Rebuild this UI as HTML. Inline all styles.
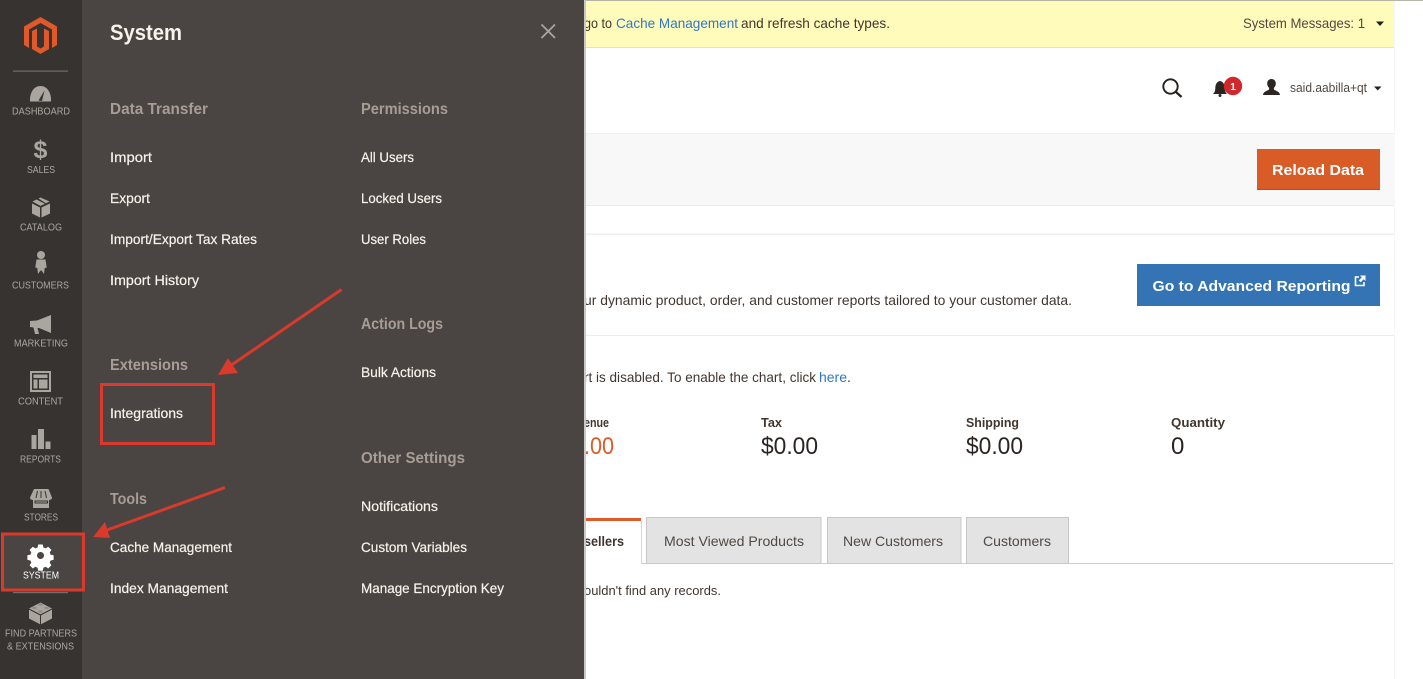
<!DOCTYPE html>
<html lang="en">
<head>
<meta charset="utf-8">
<title>System</title>
<style>
html,body{margin:0;padding:0;background:#fff;width:1423px;height:679px;overflow:hidden}
svg{display:block;position:absolute;left:0;top:0}
text{font-family:"Liberation Sans",sans-serif}
.l{font-size:14px;fill:#f7f3eb;stroke:#f7f3eb;stroke-width:.2px}
.h{font-size:16px;font-weight:bold;fill:#a79d95}
.s{font-size:10px;fill:#aaa69f;text-anchor:start}
.b{font-size:14px;fill:#41362f}
.t{font-size:14px;fill:#514943}
.i{fill:#aaa69f}
</style>
</head>
<body>
<svg width="1423" height="679" viewBox="0 0 1423 679" xmlns="http://www.w3.org/2000/svg">
<rect width="1423" height="679" fill="#fff"/>
<rect x="1394" y="0" width="1" height="679" fill="#f6f6f6"/>

<!-- banner -->
<rect x="584" y="0" width="810" height="48" fill="#fffbbb"/>
<rect x="584" y="0" width="839" height="1" fill="#b5b5a5"/>
<rect x="584" y="47" width="810" height="1" fill="#e6e3b8"/>
<text class="b" x="584" y="28" textLength="28" lengthAdjust="spacingAndGlyphs">go to</text>
<text x="616" y="28" font-size="14" fill="#2f78c5" textLength="122" lengthAdjust="spacingAndGlyphs">Cache Management</text>
<text class="b" x="741" y="28" textLength="149" lengthAdjust="spacingAndGlyphs">and refresh cache types.</text>
<text x="1243" y="28" font-size="14" fill="#514943" textLength="122" lengthAdjust="spacingAndGlyphs">System Messages: 1</text>
<path d="M1376 21.500h8l-4 4.500z" fill="#222"/>

<!-- top actions -->
<circle cx="1170.500" cy="86.500" r="7.200" fill="none" stroke="#24211f" stroke-width="1.900"/>
<path d="M1175.800 91.800l5.700 5.200" stroke="#24211f" stroke-width="2.300" fill="none"/>
<path d="M1213 94c2.200-2 2.200-4 2.400-7 .3-3.500 2-5.500 4.600-6 2.600.5 4.400 2.500 4.700 6 .2 3 .2 5 2.300 7z" fill="#2b2623"/>
<circle cx="1220" cy="95.500" r="1.500" fill="#2b2623"/>
<circle cx="1233" cy="86" r="9.200" fill="#d1282b"/>
<text x="1233" y="90" font-size="10.500" font-weight="bold" fill="#fff" text-anchor="middle">1</text>
<path d="M1263 95c.4-3.500 3.600-4 5.800-5.300.5-.8.400-1.500 0-2.200-1.300-1.500-1.800-3-1.500-5 .3-2 2-3.500 4.200-3.500 2.200 0 3.900 1.500 4.200 3.500.3 2-.2 3.500-1.500 5-.4.700-.5 1.400 0 2.200 2.200 1.300 5.400 1.800 5.800 5.300z" fill="#2b2623"/>
<text x="1290" y="92" font-size="12.500" fill="#514943" textLength="77" lengthAdjust="spacingAndGlyphs">said.aabilla+qt</text>
<path d="M1374 86.500h7.500l-3.750 4z" fill="#222"/>

<!-- reload bar -->
<rect x="584" y="134" width="810" height="71" fill="#f8f8f8"/>
<rect x="584" y="133" width="810" height="1" fill="#f0f0f0"/>
<rect x="584" y="205" width="810" height="1" fill="#ececec"/>
<rect x="1257" y="149" width="123" height="41" fill="#d95b25"/>
<rect x="1257" y="189" width="123" height="1" fill="#bd4c1c"/>
<text x="1272" y="175" font-size="15" font-weight="bold" fill="#fff" textLength="92" lengthAdjust="spacingAndGlyphs">Reload Data</text>

<rect x="584" y="233.500" width="810" height="1.500" fill="#efefef"/>
<rect x="584" y="335" width="810" height="1" fill="#ececec"/>

<!-- advanced reporting -->
<rect x="1137" y="264" width="243" height="42" fill="#3474b5"/>
<text x="1152.500" y="291" font-size="15" font-weight="bold" fill="#fff" textLength="198" lengthAdjust="spacingAndGlyphs">Go to Advanced Reporting</text>
<path d="M1359 277h-3.500v8.500h8.500v-3.500" fill="none" stroke="#fff" stroke-width="1.600"/>
<path d="M1360 275.500h5.500v5.500l-1.800-1.700-3 3-1.900-1.900 3-3z" fill="#fff"/>
<text class="b" x="584" y="305" textLength="488" lengthAdjust="spacingAndGlyphs">ur dynamic product, order, and customer reports tailored to your customer data.</text>

<!-- chart text -->
<text class="b" x="584" y="382" textLength="232" lengthAdjust="spacingAndGlyphs">rt is disabled. To enable the chart, click</text>
<text x="819" y="382" font-size="14" fill="#2f78c5" textLength="28" lengthAdjust="spacingAndGlyphs">here</text>
<text class="b" x="847" y="382">.</text>

<!-- totals -->
<g font-size="13" font-weight="bold" fill="#41362f">
<text x="584" y="427" textLength="25" lengthAdjust="spacingAndGlyphs">enue</text>
<text x="761" y="427" textLength="21" lengthAdjust="spacingAndGlyphs">Tax</text>
<text x="966" y="427" textLength="53" lengthAdjust="spacingAndGlyphs">Shipping</text>
<text x="1171" y="427" textLength="54" lengthAdjust="spacingAndGlyphs">Quantity</text>
</g>
<text x="584" y="454" font-size="24" fill="#e0592a" textLength="30" lengthAdjust="spacingAndGlyphs">.00</text>
<g font-size="24" fill="#2a2522">
<text x="761" y="454" textLength="57" lengthAdjust="spacingAndGlyphs">$0.00</text>
<text x="966" y="454" textLength="57" lengthAdjust="spacingAndGlyphs">$0.00</text>
<text x="1171" y="454">0</text>
</g>

<!-- tabs -->
<rect x="584" y="563" width="809" height="1" fill="#cfcfcf"/>
<rect x="584" y="518" width="57" height="46" fill="#fff"/>
<rect x="584" y="518" width="57" height="3" fill="#e0592a"/>
<rect x="641" y="521" width="1" height="42" fill="#d6d6d6"/>
<rect x="646.500" y="517.500" width="174.500" height="46" fill="#e3e3e3" stroke="#c8c8c8"/>
<rect x="827.500" y="517.500" width="133.500" height="46" fill="#e3e3e3" stroke="#c8c8c8"/>
<rect x="966.500" y="517.500" width="102" height="46" fill="#e3e3e3" stroke="#c8c8c8"/>
<text x="584" y="546" font-size="14" font-weight="bold" fill="#41362f" textLength="40" lengthAdjust="spacingAndGlyphs">sellers</text>
<text class="t" x="664" y="546" textLength="140" lengthAdjust="spacingAndGlyphs">Most Viewed Products</text>
<text class="t" x="843" y="546" textLength="100" lengthAdjust="spacingAndGlyphs">New Customers</text>
<text class="t" x="983" y="546" textLength="68" lengthAdjust="spacingAndGlyphs">Customers</text>
<text x="584" y="595" font-size="12.500" fill="#41362f" textLength="137" lengthAdjust="spacingAndGlyphs">ouldn't find any records.</text>

<!-- panel -->
<rect x="584" y="0" width="2" height="679" fill="#c9c9c9"/>
<rect x="82" y="0" width="502" height="679" fill="#4a4542"/>
<text x="110" y="40" font-size="22" font-weight="bold" fill="#f7f3eb" textLength="72" lengthAdjust="spacingAndGlyphs">System</text>
<path d="M541.500 24.500l13.500 13.500M555 24.500l-13.500 13.500" stroke="#aaa69f" stroke-width="1.800" fill="none"/>

<text class="h" x="110" y="114" textLength="98" lengthAdjust="spacingAndGlyphs">Data Transfer</text>
<text class="l" x="110" y="162" textLength="42" lengthAdjust="spacingAndGlyphs">Import</text>
<text class="l" x="110" y="203" textLength="40" lengthAdjust="spacingAndGlyphs">Export</text>
<text class="l" x="110" y="244" textLength="147" lengthAdjust="spacingAndGlyphs">Import/Export Tax Rates</text>
<text class="l" x="110" y="285" textLength="89" lengthAdjust="spacingAndGlyphs">Import History</text>
<text class="h" x="110" y="370" textLength="78" lengthAdjust="spacingAndGlyphs">Extensions</text>
<text class="l" x="110" y="418" textLength="73" lengthAdjust="spacingAndGlyphs">Integrations</text>
<text class="h" x="110" y="504" textLength="37" lengthAdjust="spacingAndGlyphs">Tools</text>
<text class="l" x="110" y="552" textLength="122" lengthAdjust="spacingAndGlyphs">Cache Management</text>
<text class="l" x="110" y="593" textLength="118" lengthAdjust="spacingAndGlyphs">Index Management</text>

<text class="h" x="361" y="114" textLength="87" lengthAdjust="spacingAndGlyphs">Permissions</text>
<text class="l" x="361" y="162" textLength="53" lengthAdjust="spacingAndGlyphs">All Users</text>
<text class="l" x="361" y="203" textLength="81" lengthAdjust="spacingAndGlyphs">Locked Users</text>
<text class="l" x="361" y="244" textLength="65" lengthAdjust="spacingAndGlyphs">User Roles</text>
<text class="h" x="361" y="329" textLength="82" lengthAdjust="spacingAndGlyphs">Action Logs</text>
<text class="l" x="361" y="377" textLength="75" lengthAdjust="spacingAndGlyphs">Bulk Actions</text>
<text class="h" x="361" y="463" textLength="104" lengthAdjust="spacingAndGlyphs">Other Settings</text>
<text class="l" x="361" y="511" textLength="77" lengthAdjust="spacingAndGlyphs">Notifications</text>
<text class="l" x="361" y="552" textLength="106" lengthAdjust="spacingAndGlyphs">Custom Variables</text>
<text class="l" x="361" y="593" textLength="143" lengthAdjust="spacingAndGlyphs">Manage Encryption Key</text>

<!-- sidebar -->
<rect x="0" y="0" width="82" height="679" fill="#373330"/>
<rect x="3" y="534" width="79" height="56" fill="#4a4542"/>
<path fill="#e0592a" fill-rule="evenodd" d="M40.500 17L57 26.500V45L52 48V29.500L40.500 23L29 29.500V48L24 45V26.500ZM40.500 54L32 49V31L37 28.500V46.500L40.500 48.500L44 46.500V28.500L49 31V49Z"/>
<rect x="13" y="70.500" width="55" height="1.200" fill="#736e6a"/>
<rect x="13" y="592" width="55" height="1.200" fill="#736e6a"/>

<!-- dashboard -->
<path class="i" d="M30 101.500c-.5-9 4-15.500 10.500-15.500S51.500 92.500 51 101.500z"/>
<path d="M38.500 100.500l6-10-2.500 10.500z" fill="#373330"/>
<text class="s" x="12" y="114.500" textLength="58" lengthAdjust="spacingAndGlyphs">DASHBOARD</text>
<!-- sales -->
<text x="40.500" y="158" font-size="25" font-weight="bold" fill="#aaa69f" text-anchor="middle">$</text>
<text class="s" x="27" y="173" textLength="28" lengthAdjust="spacingAndGlyphs">SALES</text>
<!-- catalog -->
<path class="i" d="M32 203.500l8 4v10l-8-4zM41.500 207.500l8.500-4v10l-8.500 4zM32.500 201.500l4-2 8.500 4.200-4.500 2.200zM38.500 198.500l2-1 9 4-3.500 1.700z"/>
<text class="s" x="20" y="230.500" textLength="42" lengthAdjust="spacingAndGlyphs">CATALOG</text>
<!-- customers -->
<circle class="i" cx="41" cy="255" r="4"/>
<path class="i" d="M36.500 259.500h9l1.200 8-2 .5-.7 6-2.500-3.500h-1l-2.500 3.500-.7-6-2-.5z"/>
<text class="s" x="12" y="288.500" textLength="57" lengthAdjust="spacingAndGlyphs">CUSTOMERS</text>
<!-- marketing -->
<path class="i" d="M51 315v18l-12-5h-1.500l1.500 6h-4l-1.500-6.500-3.500-.5v-6l7-.5z"/>
<text class="s" x="14" y="346.500" textLength="54" lengthAdjust="spacingAndGlyphs">MARKETING</text>
<!-- content -->
<path class="i" fill-rule="evenodd" d="M30 371h21v21H30zM32 373v17h17v-17zM33.500 374.500h14v3.500h-14zM33.500 379.500h4v9h-4zM39 379.500h8.500v9H39z"/>
<text class="s" x="18" y="404.500" textLength="45" lengthAdjust="spacingAndGlyphs">CONTENT</text>
<!-- reports -->
<path class="i" d="M31.500 435h5v14h-5zM38 429h6v20h-6zM45.500 441.500h5v7.500h-5z"/>
<text class="s" x="20" y="462.500" textLength="41" lengthAdjust="spacingAndGlyphs">REPORTS</text>
<!-- stores -->
<path class="i" d="M34 489h14.500l3.500 8.500c0 1.800-1.500 2.500-3 2.500v8H33v-8c-1.500 0-3-.7-3-2.500z"/>
<path d="M37.500 491l-1.500 7M41 491v7M45 491l1.500 7M35 501h12.500v2H35z" stroke="#373330" stroke-width="1" fill="none"/>
<text class="s" x="24" y="520.500" textLength="34" lengthAdjust="spacingAndGlyphs">STORES</text>
<!-- system gear -->
<g fill="#fff" transform="translate(40.500 555.500)">
<path fill-rule="evenodd" d="M-2.300-11h4.600l.6 3 2.200.9 2.600-1.700 3.200 3.200-1.700 2.600.9 2.200 3 .6v4.600l-3 .6-.9 2.200 1.700 2.600-3.200 3.200-2.600-1.700-2.200.9-.6 3h-4.600l-.6-3-2.200-.9-2.600 1.700-3.200-3.200 1.700-2.600-.9-2.200-3-.6v-4.600l3-.6.9-2.200-1.700-2.600 3.200-3.200 2.600 1.700 2.200-.9zM0-3.500a3.500 3.500 0 1 0 .01 0z"/>
</g>
<text x="23" y="578.500" font-size="10" fill="#fff" textLength="36" lengthAdjust="spacingAndGlyphs">SYSTEM</text>
<!-- partners: lego brick -->
<path class="i" d="M29 608.500l11.500-6 11.500 6v10l-11.500 6-11.500-6z"/>
<path d="M29 609l11.500 6 11.500-6M40.500 615v9.500" stroke="#373330" stroke-width="1" fill="none"/>
<g fill="#8f8b85"><ellipse cx="40.500" cy="604.500" rx="2.300" ry="1.100"/><ellipse cx="34.500" cy="608" rx="2.300" ry="1.100"/><ellipse cx="46.500" cy="608" rx="2.300" ry="1.100"/><ellipse cx="40.500" cy="611.500" rx="2.300" ry="1.100"/></g>
<text class="s" x="5" y="636.500" textLength="72" lengthAdjust="spacingAndGlyphs">FIND PARTNERS</text>
<text class="s" x="7" y="649.500" textLength="67" lengthAdjust="spacingAndGlyphs">&amp; EXTENSIONS</text>

<!-- annotations -->
<g fill="none" stroke="#d93a2b" stroke-width="3">
<rect x="101.500" y="384.500" width="112" height="59"/>
<rect x="2.500" y="534" width="81" height="56"/>
<path d="M341.500 289.500L230 366"/>
<path d="M225 487.500L107 530"/>
</g>
<path d="M218 375l10-17 10 15z" fill="#d93a2b"/>
<path d="M93 537l12-15 5 16z" fill="#d93a2b"/>
</svg>
</body>
</html>
